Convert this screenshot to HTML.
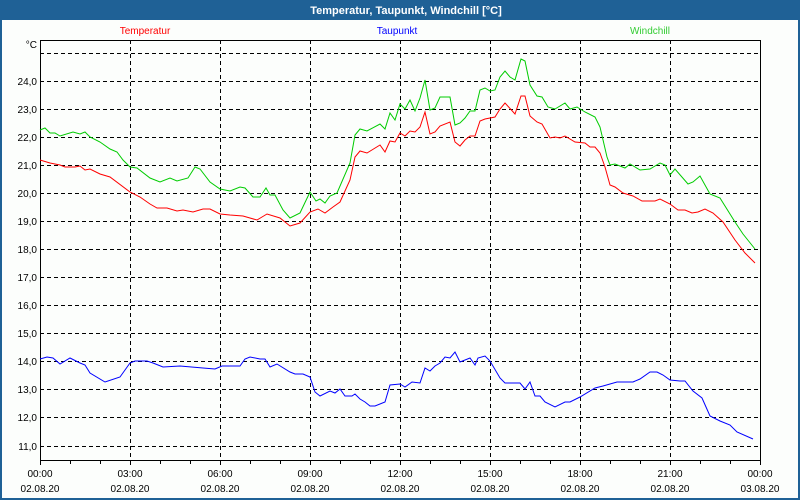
<!DOCTYPE html>
<html><head><meta charset="utf-8"><style>
html,body{margin:0;padding:0;}
body{width:800px;height:500px;overflow:hidden;background:#fcfefc;font-family:"Liberation Sans","DejaVu Sans",sans-serif;}
</style></head><body>
<svg width="800" height="500" xmlns="http://www.w3.org/2000/svg" style="display:block;font-family:'Liberation Sans',sans-serif">
<rect x="0" y="0" width="800" height="500" fill="#fcfefc"/>
<rect x="1" y="1" width="798" height="498" fill="none" stroke="#1f6196" stroke-width="2"/>
<rect x="0" y="0" width="800" height="20" fill="#1f6196"/>
<text x="406" y="14" fill="#fff" font-size="11" font-weight="bold" text-anchor="middle">Temperatur, Taupunkt, Windchill [°C]</text>
<text x="145" y="34" fill="#f00" font-size="10" text-anchor="middle">Temperatur</text>
<text x="397" y="34" fill="#00f" font-size="10" text-anchor="middle">Taupunkt</text>
<text x="650" y="34" fill="#3c3" font-size="10" text-anchor="middle">Windchill</text>
<g stroke="#000" stroke-width="1" stroke-dasharray="4,3" fill="none">
<path d="M40 53.5H760M40 81.5H760M40 109.5H760M40 137.5H760M40 165.5H760M40 193.5H760M40 221.5H760M40 249.5H760M40 277.5H760M40 305.5H760M40 333.5H760M40 361.5H760M40 389.5H760M40 417.5H760M40 446.5H760"/>
<path d="M130.5 40V460M220.5 40V460M310.5 40V460M400.5 40V460M490.5 40V460M580.5 40V460M670.5 40V460"/>
</g>
<rect x="40.5" y="40.5" width="720" height="420" fill="none" stroke="#000" stroke-width="1"/>
<path d="M40.5 460V465M70.5 460V464M100.5 460V464M130.5 460V465M160.5 460V464M190.5 460V464M220.5 460V465M250.5 460V464M280.5 460V464M310.5 460V465M340.5 460V464M370.5 460V464M400.5 460V465M430.5 460V464M460.5 460V464M490.5 460V465M520.5 460V464M550.5 460V464M580.5 460V465M610.5 460V464M640.5 460V464M670.5 460V465M700.5 460V464M730.5 460V464M760.5 460V465" stroke="#000"/>
<g font-size="10" fill="#000" text-anchor="end">
<text x="37" y="48">°C</text>
<text x="37" y="85">24,0</text><text x="37" y="113">23,0</text><text x="37" y="141">22,0</text><text x="37" y="169">21,0</text><text x="37" y="197">20,0</text><text x="37" y="225">19,0</text><text x="37" y="253">18,0</text><text x="37" y="281">17,0</text><text x="37" y="309">16,0</text><text x="37" y="337">15,0</text><text x="37" y="365">14,0</text><text x="37" y="393">13,0</text><text x="37" y="421">12,0</text><text x="37" y="450">11,0</text>
</g>
<g font-size="10" fill="#000" text-anchor="middle">
<text x="40" y="477">00:00</text><text x="130" y="477">03:00</text><text x="220" y="477">06:00</text><text x="310" y="477">09:00</text><text x="400" y="477">12:00</text><text x="490" y="477">15:00</text><text x="580" y="477">18:00</text><text x="670" y="477">21:00</text><text x="760" y="477">00:00</text>
<text x="40" y="492">02.08.20</text><text x="130" y="492">02.08.20</text><text x="220" y="492">02.08.20</text><text x="310" y="492">02.08.20</text><text x="400" y="492">02.08.20</text><text x="490" y="492">02.08.20</text><text x="580" y="492">02.08.20</text><text x="670" y="492">02.08.20</text><text x="760" y="492">03.08.20</text>
</g>
<g fill="none" stroke-width="1">
<polyline stroke="#00cc00" points="40,130 45,128 50,133 55,133 60,136 73,132 80,134 85,132 90,137 100,142 110,149 117,152 123,160 130,167 137,168 150,178 160,182 170,178 177,181 188,178 195,167 200,169 210,182 220,189 230,191 240,187 245,188 253,197 260,197 266,188 270,195 275,195 283,210 290,218 300,213 310,192 316,201 320,199 325,203 330,196 337,193 350,163 355,135 360,129 367,131 380,124 385,129 390,113 395,120 400,104 405,109 410,100 415,111 420,98 425,80 430,110 435,108 440,97 450,97 455,125 460,123 465,118 470,111 475,111 480,90 485,88 490,91 495,90 500,77 505,71 510,77 515,80 521,59 525,61 530,85 537,96 542,97 548,107 555,109 565,103 570,109 577,107 585,112 595,117 600,127 607,157 610,165 615,164 625,168 630,164 640,170 650,169 660,163 665,165 670,175 675,169 688,184 693,182 700,176 710,194 720,198 735,222 743,234 755,249"/>
<polyline stroke="#ff0000" points="40,160 50,163 60,165 65,167 75,167 80,166 85,170 90,169 100,174 110,177 130,192 140,197 150,204 157,208 167,208 177,211 183,210 193,212 203,209 210,209 220,214 230,215 243,216 257,220 267,214 280,218 290,226 300,223 310,212 318,209 325,213 333,207 340,202 350,180 355,157 360,151 367,153 380,145 385,152 390,141 395,142 400,133 405,136 410,131 415,132 420,127 425,112 430,134 435,132 440,126 450,122 455,142 460,146 465,140 470,136 475,136 480,121 485,119 495,117 500,109 505,103 515,114 521,96 525,96 530,116 537,122 542,124 550,138 555,137 560,138 565,136 575,142 585,143 590,147 595,147 600,153 605,167 610,185 615,187 623,193 633,196 642,201 655,201 660,199 670,204 678,210 685,210 692,213 698,212 705,209 713,213 723,222 735,240 745,253 755,263"/>
<polyline stroke="#0000ff" points="40,359 47,357 53,358 60,364 70,358 80,363 85,365 90,373 105,382 120,377 130,363 135,361 147,361 153,363 163,367 180,366 203,368 215,369 222,366 240,366 245,359 250,357 260,359 265,359 270,367 277,364 290,372 295,374 303,374 310,377 315,392 320,396 330,391 335,393 340,389 345,396 352,396 355,394 360,399 365,402 370,406 375,406 385,402 390,385 400,384 405,387 412,382 420,383 425,368 430,371 435,366 440,363 445,357 450,358 455,352 460,362 470,358 475,365 478,358 485,356 490,361 500,378 505,383 520,383 525,389 530,382 535,396 540,396 545,402 555,407 565,402 570,402 580,397 595,388 603,386 617,382 633,382 640,379 650,372 657,372 663,375 670,380 680,381 685,381 693,391 702,398 710,416 720,421 730,425 737,432 753,439"/>
</g>
</svg>
</body></html>
